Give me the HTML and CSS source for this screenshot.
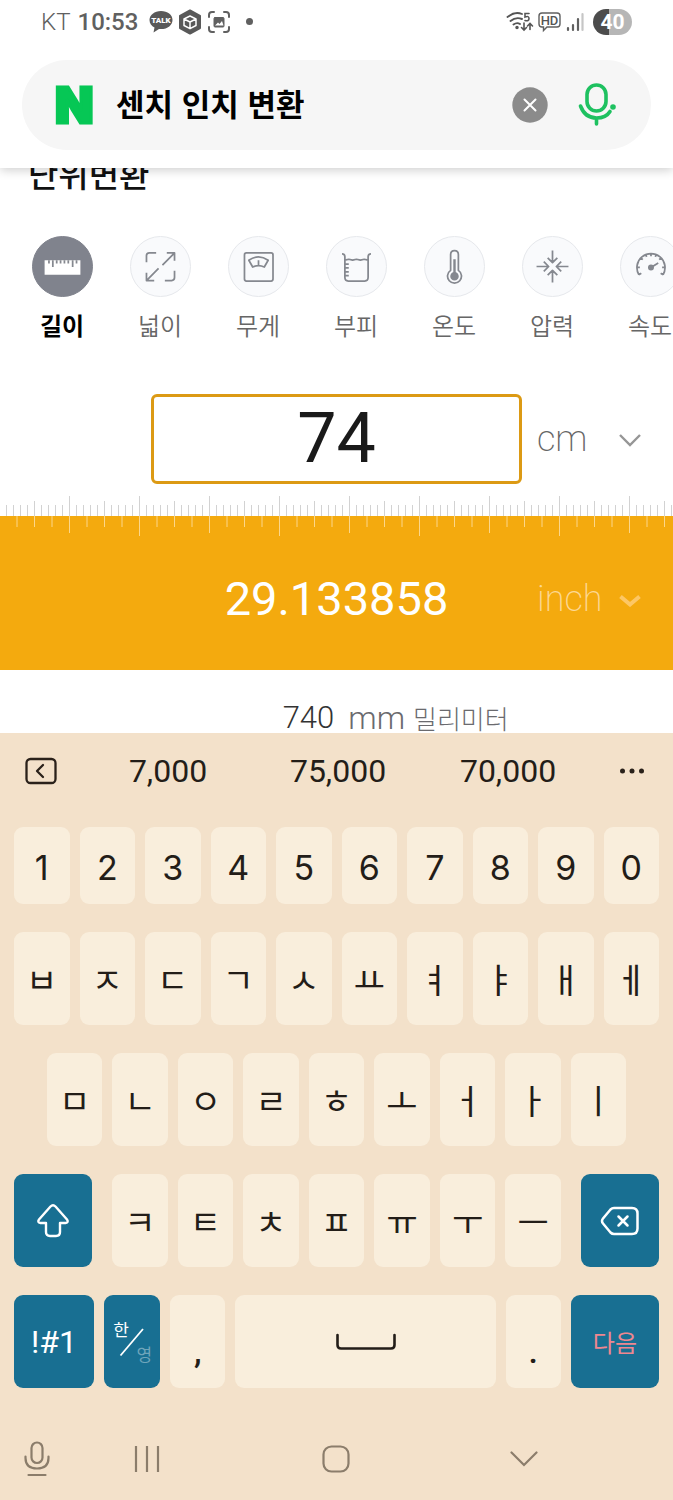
FILE: index.html
```html
<!DOCTYPE html>
<html lang="ko">
<head>
<meta charset="utf-8">
<meta name="viewport" content="width=device-width, initial-scale=1">
<title>센치 인치 변환</title>
<link rel="stylesheet" href="styles.css">
</head>
<body>
<header class="top">
  <div class="status">
    <span class="carrier">KT</span>
    <span class="clock">10:53</span>
    <div class="notices">
      <svg width="24" height="24" viewBox="0 0 24 24"><path d="M12 1C5.500 1 .5 5 .5 10c0 3.500 2 6 5 7.500L4.500 22.500 10 19c8 .8 13.500-3.500 13.500-9S18.500 1 12 1z" fill="#595959"/><text x="12" y="13" class="talk">TALK</text></svg>
      <svg width="24" height="26" viewBox="0 0 24 26"><path d="M12 1.500l10 5.500v12l-10 5.500L2 19V7z" fill="#595959" stroke="#595959" stroke-width="2" stroke-linejoin="round"/><path d="M12 7l6 3v6.500l-6 3.200-6-3.200V10zM6 10l6 3 6-3M12 13v6.500" fill="none" stroke="#fff" stroke-width="1.500" stroke-linejoin="round"/></svg>
      <svg width="24" height="24" viewBox="0 0 24 24" fill="none" stroke="#606060" stroke-width="2" stroke-linecap="round"><path d="M2 7V5q0-3 3-3h2M17 2h2q3 0 3 3v2M22 17v2q0 3-3 3h-2M7 22H5q-3 0-3-3v-2"/><rect x="7" y="7.500" width="10" height="9.500" rx="1" fill="#606060" stroke-width="1"/><path d="M8 15.500l3-3 1.500 1.500 2.500-3 1.500 4.500z" fill="#fff" stroke="none"/></svg>
      <i class="more-dot"></i>
    </div>
    <div class="signals">
      <svg width="28" height="22" viewBox="0 0 28 22" fill="none" stroke="#555" stroke-width="1.900" stroke-linecap="round"><path d="M1.500 6Q9 0 16 3M4.500 10Q10 5.500 16 8M7.500 13.500Q11 11 14 13"/><circle cx="11" cy="16.500" r=".8" fill="#555"/><path d="M23 2.500h-4v3.500q4-1.500 4 1.500t-4 2M18 12v7M15.500 16.500L18 19l2.500-2.500M24 18.500v-6M21.500 15L24 12.500l2.500 2.500" stroke-width="1.600"/></svg>
      <svg width="24" height="22" viewBox="0 0 24 22"><path d="M4 2h15q3 0 3 3v8q0 3-3 3H9l-3.500 3.500V16H4q-3 0-3-3V5q0-3 3-3z" fill="none" stroke="#606060" stroke-width="1.400"/><text x="11.500" y="14" class="hd">HD</text></svg>
      <svg width="20" height="22" viewBox="0 0 20 22" stroke-width="2.200" stroke-linecap="round"><path d="M2 17v2M7 14v5M12 8v11" stroke="#606060"/><path d="M16.500 3v16" stroke="#c6c6c6"/></svg>
      <span class="battery">40</span>
    </div>
  </div>
  <form class="search">
    <span class="logo">N</span>
    <input class="query" type="text" value="센치 인치 변환" aria-label="검색어">
    <button class="icon-btn" type="button" aria-label="지우기"><svg width="36" height="36" viewBox="0 0 36 36"><circle cx="18" cy="18" r="17.700" fill="#8b8b8b"/><path d="M12.500 12.500l11 11M23.500 12.500l-11 11" stroke="#fff" stroke-width="2" stroke-linecap="round"/></svg></button>
    <button class="icon-btn" type="button" aria-label="음성 검색"><svg width="38" height="44" viewBox="0 0 38 44" fill="none" stroke="#1ec160" stroke-width="3.600" stroke-linecap="round"><rect x="9" y="2" width="19" height="26" rx="9.500"/><path d="M2.500 23Q7 35 18.500 35 28 35 32 28.500M18.500 35.500v5.500"/><circle cx="35" cy="24" r="2.800" fill="#1ec160" stroke="none"/></svg></button>
  </form>
</header>

<main class="converter">
  <h1 class="title">단위변환</h1>
  <nav class="tabs">
    <button class="tab active" type="button"><svg class="disc" viewBox="0 0 61 61"><path d="M12 24h37v15H12z" fill="#fff" stroke="none"/><path d="M16.500 24v3.500M20.500 24v7M24.500 24v3.500M28.500 24v3.500M32.500 24v3.500M36.500 24v3.500M41 24v7M45 24v3.500"/></svg>길이</button>
    <button class="tab" type="button"><svg class="disc" viewBox="0 0 61 61"><path d="M16 26v-6.500q0-3 3-3h7M45 35v7q0 3-3 3h-7M32.500 29L45 16.500M37 16.500h8v8M28.500 32.500L16 45M16 37v8h8"/></svg>넓이</button>
    <button class="tab" type="button"><svg class="disc" viewBox="0 0 61 61"><rect x="16" y="16.500" width="29.500" height="29" rx="2"/><path d="M20.500 24Q30.500 17 40.500 24L36.500 31q-6-3-12 0zM30.500 24v5"/></svg>무게</button>
    <button class="tab" type="button"><svg class="disc" viewBox="0 0 61 61"><path d="M15.500 17.500q3 0 3 3V42q0 3.500 3.500 3.500h17q3.500 0 3.500-3.500V20.500q0-3 3-3M18.500 24l4-1 4 1 4-1 4 1 4-1 4 1M19 28h3.500M19 32h3.500M19 36h3.500M19 40h3.500"/></svg>부피</button>
    <button class="tab" type="button"><svg class="disc" viewBox="0 0 61 61"><path d="M26.500 34.500V18q0-4 4-4t4 4v16.500a7.200 7.200 0 1 1-8 0z"/><path d="M30.500 23v15" stroke-width="2.500"/><circle cx="30.500" cy="40.500" r="3.500" fill="#85888f"/></svg>온도</button>
    <button class="tab" type="button"><svg class="disc" viewBox="0 0 61 61"><path d="M30.500 14v12.500M25.500 21.500l5 5 5-5M30.500 47V34.500M25.500 39.500l5-5 5 5M14 30.500h12.500M21.500 25.500l5 5-5 5M47 30.500H34.500M39.500 25.500l-5 5 5 5"/></svg>압력</button>
    <button class="tab" type="button"><svg class="disc" viewBox="0 0 61 61"><path d="M18.500 39a14.500 14.500 0 1 1 25 0M18.500 39l2.500-1.500M43.500 39L41 37.500M16.500 31.500h3M45.500 31.500h-3M20.500 21.500l2 2M41.500 21.500l-2 2M31 17v3M25.500 18l1 2.500M36.500 18l-1 2.500M31 31.500l7.500-4.500"/><circle cx="31" cy="31.500" r="2.200" fill="#85888f"/></svg>속도</button>
  </nav>

  <div class="row">
    <input class="amount" type="text" value="74" aria-label="길이 값">
    <label class="unit"><select aria-label="입력 단위"><option>cm</option></select><svg width="24" height="16" viewBox="0 0 24 16"><path d="M2 4l10 10 10-10" fill="none" stroke="#969696" stroke-width="2.400"/></svg></label>
  </div>

  <svg class="ruler" width="100%" height="41" aria-hidden="true">
    <defs>
      <pattern id="mm" x="69" y="0" width="70" height="20" patternUnits="userSpaceOnUse"><path d="M.5 0v20M35.500 5v15M7.500 9v11M14.500 9v11M21.500 9v11M28.500 9v11M42.500 9v11M49.500 9v11M56.500 9v11M63.500 9v11" stroke="#d2d2d2"/></pattern>
      <pattern id="in" x="139" y="20" width="140" height="21" patternUnits="userSpaceOnUse"><path d="M.5 0v20M70.500 0v17M18 0v11M35.500 0v11M53 0v11M88 0v11M105.500 0v11M123 0v11" stroke="#fbd68a"/></pattern>
    </defs>
    <rect width="100%" height="20" fill="url(#mm)"/>
    <rect y="20" width="100%" height="21" fill="#f4aa0e"/>
    <rect y="20" width="100%" height="21" fill="url(#in)"/>
  </svg>

  <div class="result row">
    <output class="value">29.133858</output>
    <label class="unit"><select aria-label="결과 단위"><option>inch</option></select><svg width="24" height="16" viewBox="0 0 24 16"><path d="M2.500 5.500l9.500 8 9.500-8" fill="none" stroke="#fdc765" stroke-width="4"/></svg></label>
  </div>
  <p class="more"><span class="num">740</span><span class="abbr">mm</span><span class="name">밀리미터</span></p>
</main>

<section class="keyboard">
  <div class="suggest">
    <button class="bare" type="button" aria-label="접기"><svg width="32" height="28" viewBox="0 0 32 28" fill="none" stroke="#2a211a" stroke-width="2.300" stroke-linecap="round" stroke-linejoin="round"><rect x="1.500" y="2" width="29" height="24" rx="4"/><path d="M18 8l-6 6 6 6"/></svg></button>
    <div class="words">
      <button class="bare word" type="button">7,000</button>
      <button class="bare word" type="button">75,000</button>
      <button class="bare word" type="button">70,000</button>
    </div>
    <button class="bare" type="button" aria-label="더보기"><svg width="26" height="8" viewBox="0 0 26 8" fill="#2a211a"><circle cx="3.500" cy="4" r="2.500"/><circle cx="13" cy="4" r="2.500"/><circle cx="22.500" cy="4" r="2.500"/></svg></button>
  </div>
  <div class="keys digits">
    <button class="key">1</button><button class="key">2</button><button class="key">3</button><button class="key">4</button><button class="key">5</button><button class="key">6</button><button class="key">7</button><button class="key">8</button><button class="key">9</button><button class="key">0</button>
  </div>
  <div class="keys">
    <button class="key">ㅂ</button><button class="key">ㅈ</button><button class="key">ㄷ</button><button class="key">ㄱ</button><button class="key">ㅅ</button><button class="key">ㅛ</button><button class="key">ㅕ</button><button class="key">ㅑ</button><button class="key">ㅐ</button><button class="key">ㅔ</button>
  </div>
  <div class="keys inset">
    <button class="key">ㅁ</button><button class="key">ㄴ</button><button class="key">ㅇ</button><button class="key">ㄹ</button><button class="key">ㅎ</button><button class="key">ㅗ</button><button class="key">ㅓ</button><button class="key">ㅏ</button><button class="key">ㅣ</button>
  </div>
  <div class="keys wide-gap">
    <button class="key action shift" aria-label="Shift"><svg width="34" height="36" viewBox="0 0 34 36" fill="none" stroke="#fff" stroke-width="2.400" stroke-linejoin="round"><path d="M14.500 3.500q2.500-2.500 5 0l11.500 13q2 3-1.500 3.500H24v9q0 4-4 4h-6q-4 0-4-4v-9H4.500Q1 19.500 3 16.500z"/></svg></button>
    <div class="keys group"><button class="key">ㅋ</button><button class="key">ㅌ</button><button class="key">ㅊ</button><button class="key">ㅍ</button><button class="key">ㅠ</button><button class="key">ㅜ</button><button class="key">ㅡ</button></div>
    <button class="key action shift" aria-label="지우기"><svg width="40" height="30" viewBox="0 0 40 30" fill="none" stroke="#fff" stroke-width="2.500" stroke-linecap="round" stroke-linejoin="round"><path d="M14 2h18q5.500 0 5.500 5.500v15Q37.500 28 32 28H14q-2 0-3.500-1.500l-7.500-9q-2-2.500 0-5l7.500-9Q12 2 14 2z"/><path d="M18.500 10.500l9 9M27.500 10.500l-9 9"/></svg></button>
  </div>
  <div class="keys">
    <button class="key action sym">!#1</button>
    <button class="key action lang" aria-label="한/영"><span class="ko">한</span><svg width="26" height="30" viewBox="0 0 26 30"><path d="M1.500 28.500L24 2" stroke="#fff" stroke-width="1.800"/></svg><span class="en">영</span></button>
    <button class="key punct">,</button>
    <button class="key space" aria-label="스페이스"><svg width="60" height="18" viewBox="0 0 60 18"><path d="M1.500 2v10q0 3.500 3.500 3.500h50q3.500 0 3.500-3.500V2" fill="none" stroke="#231d18" stroke-width="2.600" stroke-linecap="round"/></svg></button>
    <button class="key punct">.</button>
    <button class="key action next">다음</button>
  </div>
  <nav class="navbar">
    <button class="bare mic" aria-label="음성 입력"><svg width="26" height="36" viewBox="0 0 26 36" fill="none" stroke="#8b7d6b" stroke-width="2.200" stroke-linecap="round"><rect x="7.500" y="1.500" width="11" height="20.500" rx="5.500"/><path d="M1.500 15.500v1.500q0 10.500 11.500 10.500T24.500 17v-1.500M4.500 34h17"/></svg></button>
    <button class="bare recents" aria-label="최근 앱"><svg width="26" height="28" viewBox="0 0 26 28" stroke="#8b7d6b" stroke-width="2.200"><path d="M2 1v26M13 1v26M24 1v26"/></svg></button>
    <button class="bare home" aria-label="홈"><svg width="28" height="28" viewBox="0 0 28 28"><rect x="1.500" y="1.500" width="25" height="25" rx="8" fill="none" stroke="#8b7d6b" stroke-width="2.200"/></svg></button>
    <button class="bare hide" aria-label="키보드 숨기기"><svg width="28" height="18" viewBox="0 0 28 18"><path d="M1.500 2.500L14 15 26.500 2.500" fill="none" stroke="#8b7d6b" stroke-width="2.200" stroke-linecap="round"/></svg></button>
  </nav>
</section>
</body>
</html>
```
FILE: styles.css
```css
* { box-sizing: border-box; }
body {
  margin: 0;
  min-height: 100vh;
  display: flex;
  flex-direction: column;
  background: #fff;
  color: #111;
  font-family: Roboto, "Noto Sans CJK KR", sans-serif;
}
button, input, select { font: inherit; color: inherit; border: 0; padding: 0; margin: 0; background: none; }
svg { display: block; flex: none; }

/* header */
.top { position: relative; z-index: 1; background: #fff; padding: 0 22px 18px; box-shadow: 0 2px 10px rgba(0, 0, 0, .2); }
.status { display: flex; align-items: center; height: 60px; padding: 0 19px 17px; color: #606060; font-size: 24px; }
.carrier { margin-right: 7px; font-weight: 300; }
.clock { font-weight: 500; }
.notices { display: flex; align-items: center; gap: 5px; margin-left: 11px; }
.talk { font: 900 8px Roboto, sans-serif; fill: #fff; text-anchor: middle; }
.hd { font: 500 13px Roboto, sans-serif; fill: #555; text-anchor: middle; }
.more-dot { width: 7px; height: 7px; margin-left: 10px; border-radius: 50%; background: #606060; }
.signals { display: flex; align-items: center; gap: 4px; margin-left: auto; }
.battery { width: 39px; height: 26px; margin-left: 3px; border-radius: 13px; background: linear-gradient(90deg, #4c4c4c 16px, #b6b6b6 16px); color: #fff; font-weight: 700; font-size: 21px; line-height: 26px; text-align: center; }
.search { display: flex; align-items: center; height: 90px; padding: 0 35px 0 33px; border-radius: 45px; background: #f6f6f6; }
.logo { width: 42px; margin-right: 19px; font: 900 50px/60px Inter, sans-serif; color: #06c755; -webkit-text-stroke: 3px #06c755; }
.query { flex: 1; min-width: 0; height: 60px; padding-bottom: 5px; font-size: 31px; font-weight: 700; color: #000; font-family: "Noto Sans CJK KR", sans-serif; outline: 0; }
.icon-btn + .icon-btn { margin-left: 30px; }

/* converter */
.title { margin: -15px 0 0 28px; font: 500 33px/40px "Noto Sans CJK KR", sans-serif; }
.tabs { display: flex; overflow: hidden; margin-top: 43px; padding-left: 13px; }
.tab { flex: none; display: flex; flex-direction: column; align-items: center; gap: 12px; width: 98px; color: #666; font: 350 24px/32px "Noto Sans CJK KR", sans-serif; }
.disc { width: 61px; height: 61px; border: 1px solid #e6e8ec; border-radius: 50%; background: #f9fafc; fill: none; stroke: #85888f; stroke-width: 1.8; stroke-linejoin: round; }
.active { color: #000; font-weight: 700; }
.active .disc { border-color: #80838d; background: #80838d; }
.row { display: grid; grid-template-columns: 151fr 371fr 151fr; align-items: center; }
.amount { grid-column: 2; width: 100%; height: 90px; border: 3px solid #dc9a14; border-radius: 6px; font-size: 70px; line-height: 84px; padding-bottom: 3px; text-align: center; color: #1a1a1a; outline: 0; }
.converter > .row:not(.result) { margin-top: 53px; }
.unit { display: flex; align-items: center; justify-content: space-between; padding: 0 31px 0 15px; color: #666; font-size: 36px; font-weight: 200; }
.unit select { appearance: none; outline: 0; }
.ruler { margin-top: 12px; }
.result { height: 133px; padding-bottom: 10px; background: #f4aa0e; }
.value { grid-column: 2; text-align: center; color: #fff; font-size: 47px; }
.result .unit { color: #fdd893; }
.more { display: flex; align-items: center; height: 63px; margin: 0; padding: 32px 0 0 42%; font-size: 32px; line-height: 32px; color: #6a6a6e; font-weight: 350; }
.num { color: #333; font-size: 31px; }
.abbr { margin: 0 8px 0 14px; }
.name { font: 300 26px/32px "Noto Sans CJK KR", sans-serif; }

/* keyboard */
.keyboard { flex: 1; display: flex; flex-direction: column; gap: 28px; padding: 0 14px; background: #f3e1ca; color: #231d18; }
.suggest { display: flex; align-items: center; height: 66px; padding: 10px 14px 0 11px; }
.bare { display: flex; align-items: center; justify-content: center; }
.words { flex: 1; display: flex; justify-content: center; }
.word { flex: 0 1 170px; font-size: 32px; line-height: 40px; }
.keys { display: flex; gap: 10px; height: 93px; }
.digits { height: 77px; }
.inset { padding: 0 33px; }
.wide-gap { gap: 20px; }
.group { flex: 448 1 0; }
.key { flex: 1 1 0; min-width: 0; display: flex; align-items: center; justify-content: center; border-radius: 9px; background: #f9eedc; font: 400 34px/48px "Noto Sans CJK KR", sans-serif; }
.digits .key { padding-top: 4px; font-family: Inter, sans-serif; }
.action { background: #186f92; color: #fff; }
.shift { flex: 78 1 0; }
.sym { flex: 80 1 0; font-family: Roboto, sans-serif; font-size: 32px; }
.lang { flex: 56 1 0; display: grid; grid-template: 1fr / 1fr; }
.lang > * { grid-area: 1 / 1; place-self: center; }
.lang .ko, .lang .en { font-size: 17px; line-height: 22px; }
.lang .ko { place-self: start; margin: 23px 0 0 9px; }
.lang .en { place-self: end; margin: 0 8px 23px 0; color: #6fa5bb; }
.punct { flex: 55 1 0; font-family: Roboto, sans-serif; font-weight: 500; padding-top: 18px; }
.space { flex: 260 1 0; }
.next { flex: 88 1 0; color: #ee8790; font-size: 24px; }
.navbar { display: grid; grid-template-columns: 46fr 174fr 203fr 174fr 48fr; align-items: center; height: 64px; margin-top: 11px; }
.home { grid-column: 3; }
```
